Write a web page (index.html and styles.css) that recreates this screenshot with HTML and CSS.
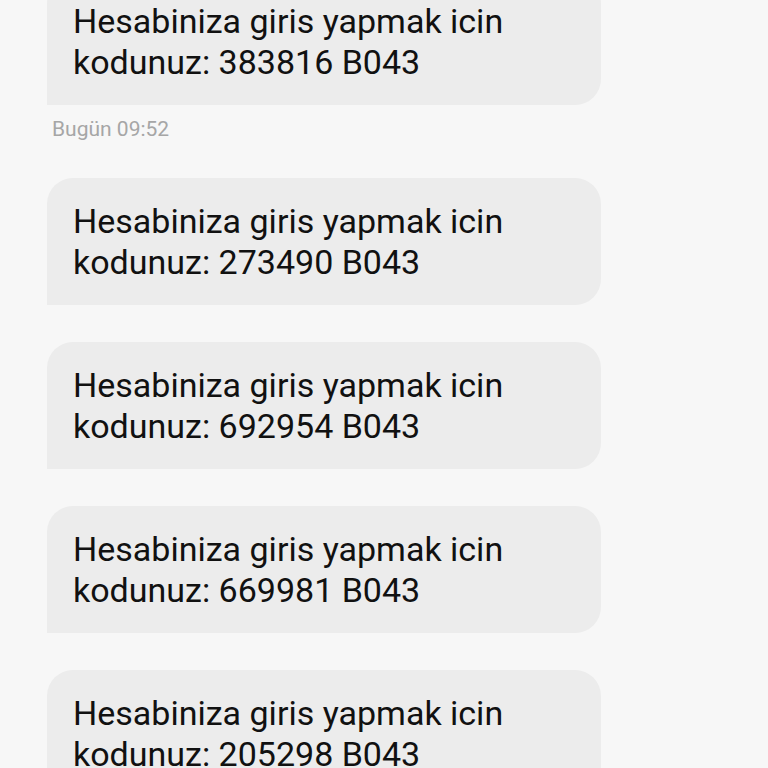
FILE: index.html
```html
<!DOCTYPE html>
<html>
<head>
    <title>Mesajlar</title>
    <link rel="stylesheet" href="styles.css">
</head>
<body>
    <div class="thread">
        <div class="bubble">Hesabiniza giris yapmak icin<br>kodunuz: 383816 B043</div>
        <div class="stamp">Bugün 09:52</div>
        <div class="bubble">Hesabiniza giris yapmak icin<br>kodunuz: 273490 B043</div>
        <div class="bubble">Hesabiniza giris yapmak icin<br>kodunuz: 692954 B043</div>
        <div class="bubble">Hesabiniza giris yapmak icin<br>kodunuz: 669981 B043</div>
        <div class="bubble">Hesabiniza giris yapmak icin<br>kodunuz: 205298 B043</div>
    </div>
</body>
</html>
```
FILE: styles.css
```css
html, body {
    margin: 0;
    background-color: #f7f7f7;
    overflow: hidden;
}
.thread {
    display: flex;
    flex-direction: column;
    align-items: flex-start;
    gap: 37px;
    margin-top: -22px;
    padding-left: 47px;
    font-family: Roboto, "Noto Sans", sans-serif;
}
.bubble {
    box-sizing: border-box;
    width: 554px;
    height: 127px;
    padding: 23px 26px 0;
    background-color: #ececec;
    border-radius: 26px 26px 26px 0;
    color: #111;
    font-size: 34px;
    line-height: 41px;
}
.stamp {
    margin: -25px 0 0 5px;
    color: #a6a6a6;
    font-size: 21px;
    line-height: 24px;
}
```
